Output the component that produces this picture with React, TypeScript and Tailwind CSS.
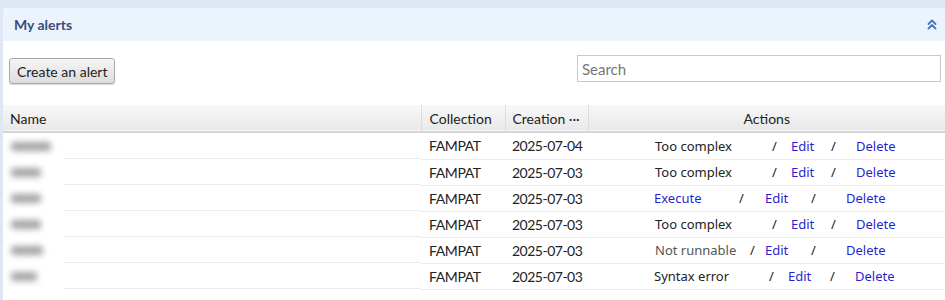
import React from 'react';

interface Row {
  blob: string;
  date: string;
  status: string;
  kind: 'text' | 'link' | 'muted';
  // left offsets inside the actions cell, written out per row
  cls: [string, string, string, string, string];
}

const rows: Row[] = [
  { blob: 'w-[40px]', date: '2025-07-04', status: 'Too complex', kind: 'text', cls: ['left-[67px]', 'left-[184px]', 'left-[203px]', 'left-[243px]', 'left-[268px]'] },
  { blob: 'w-[30px]', date: '2025-07-03', status: 'Too complex', kind: 'text', cls: ['left-[67px]', 'left-[184px]', 'left-[203px]', 'left-[243px]', 'left-[268px]'] },
  { blob: 'w-[30px]', date: '2025-07-03', status: 'Execute', kind: 'link', cls: ['left-[66px]', 'left-[151px]', 'left-[177px]', 'left-[223px]', 'left-[258px]'] },
  { blob: 'w-[30px]', date: '2025-07-03', status: 'Too complex', kind: 'text', cls: ['left-[67px]', 'left-[184px]', 'left-[203px]', 'left-[243px]', 'left-[268px]'] },
  { blob: 'w-[32px]', date: '2025-07-03', status: 'Not runnable', kind: 'muted', cls: ['left-[67px]', 'left-[162px]', 'left-[177px]', 'left-[223px]', 'left-[258px]'] },
  { blob: 'w-[26px]', date: '2025-07-03', status: 'Syntax error', kind: 'text', cls: ['left-[66px]', 'left-[181px]', 'left-[200px]', 'left-[242px]', 'left-[267px]'] },
];

const statusColor = (kind: Row['kind']) => {
  switch (kind) {
    case 'link': return 'text-[#2a1fd0]';
    case 'muted': return 'text-[#555]';
    default: return 'text-[#222]';
  }
};

function DoubleUp() {
  return (
    <svg width="10" height="11" viewBox="0 0 10 11" fill="none" stroke="#4a74b8" strokeWidth="1.8" strokeLinecap="round" strokeLinejoin="round">
      <path d="M1.5 5 L5 1.5 L8.5 5" />
      <path d="M1.5 9.5 L5 6 L8.5 9.5" />
    </svg>
  );
}

export default function App() {
  return (
    <div className="w-[945px] h-[300px] bg-[#dfe7f5] pt-[8px] pl-[3px] overflow-hidden" style={{ fontFamily: 'Lato, "Noto Sans", sans-serif' }}>
      <div className="h-full bg-white rounded-tl-[4px] overflow-hidden">
        <div className="h-[33px] bg-[#ebf3fd] flex items-center justify-between pl-[11px] pr-[8px]">
          <span className="text-[14px] font-bold text-[#3b4c7c]">My alerts</span>
          <DoubleUp />
        </div>

        <div className="flex items-start justify-between pl-[6px] pr-[4px] pt-[14px] h-[64px]">
          <button className="mt-[3px] h-[26px] px-[7px] text-[14px] text-[#222] border border-[#a9a9a9] rounded-[3px] bg-gradient-to-b from-[#f6f6f6] to-[#dcdcdc] shadow-[0_1px_1px_rgba(0,0,0,0.15)]">
            Create an alert
          </button>
          <input
            placeholder="Search"
            className="w-[364px] h-[27px] border border-[#c8c8d0] px-[4px] text-[15px] placeholder:text-[#777] outline-none"
          />
        </div>

        <table className="w-full border-collapse text-[13px] text-[#222] table-fixed">
          <thead>
            <tr className="h-[27px] bg-gradient-to-b from-[#f8f8f8] to-[#e9e9e9] border-b-2 border-[#d6d6d6] text-[14px] text-[#222]">
              <th className="w-[418px] text-left font-normal pl-[7px] border-r border-[#dcdcdc]">Name</th>
              <th className="w-[84px] text-left font-normal pl-[8px] border-r border-[#dcdcdc]">Collection</th>
              <th className="w-[83px] text-left font-normal pl-[7px] border-r border-[#dcdcdc]">Creation ···</th>
              <th className="text-center font-normal">Actions</th>
            </tr>
          </thead>
          <tbody>
            {rows.map((r, i) => (
              <tr key={i} className="h-[26px]">
                <td className="relative p-0">
                  <div className="absolute left-0 top-0 w-[61px] h-[27px] bg-white z-10 flex items-center pl-[8px]">
                    <span className={`h-[9px] ${r.blob} rounded-[3px] bg-[#a4a4a4] blur-[3px]`} />
                  </div>
                  <div className="h-[26px] border-b border-[#ececec]" />
                </td>
                <td className="pl-[8px] border-b border-[#ececec] text-[14px] tracking-[-0.4px]">FAMPAT</td>
                <td className="pl-[7px] border-b border-[#ececec] text-[14px] tracking-[-0.5px]">{r.date}</td>
                <td className="relative p-0 border-b border-[#ececec]" style={{ fontFamily: '"Noto Sans", sans-serif' }}>
                  <div className="relative h-[24px] text-[13px] leading-[24px]">
                    <span className={`absolute ${r.cls[0]} ${statusColor(r.kind)}`}>{r.status}</span>
                    <span className={`absolute ${r.cls[1]} text-[#222]`}>/</span>
                    <span className={`absolute ${r.cls[2]} text-[#2a1fd0]`}>Edit</span>
                    <span className={`absolute ${r.cls[3]} text-[#222]`}>/</span>
                    <span className={`absolute ${r.cls[4]} text-[#2a1fd0]`}>Delete</span>
                  </div>
                </td>
              </tr>
            ))}
          </tbody>
        </table>
      </div>
    </div>
  );
}
